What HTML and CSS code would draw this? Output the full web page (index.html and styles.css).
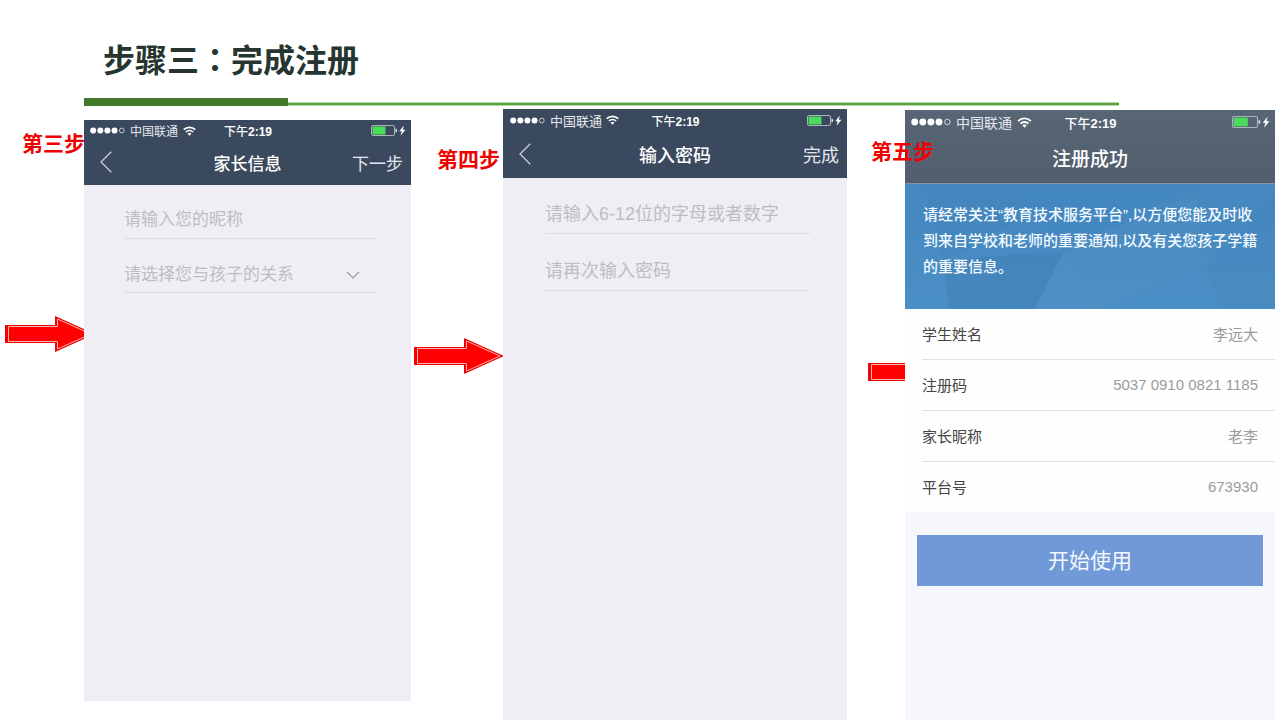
FILE: index.html
```html
<!DOCTYPE html>
<html lang="zh-CN">
<head>
<meta charset="utf-8">
<meta name="viewport" content="width=device-width, initial-scale=1">
<title>步骤三：完成注册</title>
<link rel="stylesheet" href="styles.css">
</head>
<body>
<svg class="defs" aria-hidden="true">
  <symbol id="dots" viewBox="0 0 35 7">
    <g fill="#fff"><circle cx="3.2" cy="3.5" r="3"/><circle cx="10.3" cy="3.5" r="3"/><circle cx="17.4" cy="3.5" r="3"/><circle cx="24.5" cy="3.5" r="3"/></g>
    <circle cx="31.8" cy="3.5" r="2.4" fill="none" stroke="#dfe4ea" stroke-width=".8"/>
  </symbol>
  <symbol id="wifi" viewBox="0 0 13 10">
    <g fill="none" stroke="#fff" stroke-width="1.7"><path d="M.7 3.7a8.2 8.2 0 0 1 11.6 0"/><path d="M2.9 6a5.1 5.1 0 0 1 7.2 0"/></g>
    <path d="M6.5 9.8 4.5 7.6a2.9 2.9 0 0 1 4 0z" fill="#fff"/>
  </symbol>
  <symbol id="battery" viewBox="0 0 35 11">
    <rect x=".5" y=".5" width="23" height="10" rx="1.5" fill="none" stroke="#a9b3bd"/>
    <rect x="1.500" y="1.500" width="13" height="8" fill="#4bdc5c"/>
    <path d="M24.5 3.6q1.6 0 1.6 1.9t-1.6 1.9z" fill="#e8ecf0"/>
    <path d="M32.800.6 28.300 6.200h2.400l-1.200 4.500L34.500 4.800h-2.700z" fill="#fff"/>
  </symbol>
  <symbol id="back" viewBox="0 0 12 22"><path d="M11.3.8 1 11l10.3 10.2" fill="none" stroke="#c9d2dc" stroke-width="1.3"/></symbol>
  <symbol id="arrow" viewBox="0 0 90 38">
    <path d="M0 10h50V1l40 18-40 18v-9H0z" fill="#f00202"/>
    <path d="M3.5 11.5h49V4L86 19 52.500 34v-7.500h-49z" fill="#f00" stroke="#ffb0b0"/>
  </symbol>
</svg>

<div class="slide">
  <header class="heading">
    <h1>步骤三<span class="colon" lang="zh-TW">：</span>完成注册</h1>
    <div class="rule"><i class="rule-thick"></i><i class="rule-thin"></i></div>
  </header>

  <main class="steps">
    <div class="gutter gutter-three">
      <h2>第三步</h2>
      <svg class="arrow" aria-hidden="true"><use href="#arrow"/></svg>
    </div>

    <section class="phone phone-three">
      <div class="bar">
        <div class="status">
          <span class="carrier"><svg class="dots"><use href="#dots"/></svg>中国联通<svg class="wifi"><use href="#wifi"/></svg></span>
          <span class="time">下午<b>2:19</b></span>
          <svg class="battery"><use href="#battery"/></svg>
        </div>
        <div class="nav">
          <button class="back" aria-label="返回"><svg><use href="#back"/></svg></button>
          <h3>家长信息</h3>
          <button class="action">下一步</button>
        </div>
      </div>
      <form class="form">
        <input class="field" type="text" placeholder="请输入您的昵称" aria-label="昵称">
        <div class="picker">
          <select class="field" aria-label="与孩子的关系"><option>请选择您与孩子的关系</option></select>
          <svg class="chevron" viewBox="0 0 14 8" aria-hidden="true"><path d="m1 1 6 6 6-6" fill="none" stroke="#9c9ca4" stroke-width="1.2"/></svg>
        </div>
      </form>
    </section>

    <div class="gutter gutter-four">
      <h2>第四步</h2>
      <svg class="arrow" aria-hidden="true"><use href="#arrow"/></svg>
    </div>

    <section class="phone phone-four">
      <div class="bar">
        <div class="status">
          <span class="carrier"><svg class="dots"><use href="#dots"/></svg>中国联通<svg class="wifi"><use href="#wifi"/></svg></span>
          <span class="time">下午<b>2:19</b></span>
          <svg class="battery"><use href="#battery"/></svg>
        </div>
        <div class="nav">
          <button class="back" aria-label="返回"><svg><use href="#back"/></svg></button>
          <h3>输入密码</h3>
          <button class="action">完成</button>
        </div>
      </div>
      <form class="form">
        <input class="field" type="password" placeholder="请输入6-12位的字母或者数字" aria-label="密码">
        <input class="field" type="password" placeholder="请再次输入密码" aria-label="确认密码">
      </form>
    </section>

    <div class="gutter gutter-five">
      <h2>第五步</h2>
      <svg class="arrow" aria-hidden="true"><use href="#arrow"/></svg>
    </div>

    <section class="phone phone-five">
      <div class="bar">
        <div class="status">
          <span class="carrier"><svg class="dots"><use href="#dots"/></svg>中国联通<svg class="wifi"><use href="#wifi"/></svg></span>
          <span class="time">下午<b>2:19</b></span>
          <svg class="battery"><use href="#battery"/></svg>
        </div>
        <div class="nav"><h3>注册成功</h3></div>
      </div>
      <div class="banner">
        <svg class="facets" viewBox="0 0 370 125" preserveAspectRatio="none" aria-hidden="true">
          <path d="M20 0h82l22 32-85 45z" fill="#3d7db4" opacity=".2"/>
          <path d="M102 0h190l-133 68z" fill="#3f86c4" opacity=".3"/>
          <path d="M38 76l121-9-29 58H44z" fill="#3877ab" opacity=".3"/>
          <path d="M159 68l35 57h-64z" fill="#6aa3cf" opacity=".15"/>
          <path d="M159 68 292 10l10 70-108 45z" fill="#6ba5d0" opacity=".1"/>
          <path d="M302 80l68-70v115h-56z" fill="#3f80b8" opacity=".15"/>
        </svg>
        <p>请经常关注“教育技术服务平台”,以方便您能及时收<br>到来自学校和老师的重要通知,以及有关您孩子学籍<br>的重要信息。</p>
      </div>
      <dl class="details">
        <div><dt>学生姓名</dt><dd>李远大</dd></div>
        <div><dt>注册码</dt><dd>5037 0910 0821 1185</dd></div>
        <div><dt>家长昵称</dt><dd>老李</dd></div>
        <div><dt>平台号</dt><dd>673930</dd></div>
      </dl>
      <div class="start"><button>开始使用</button></div>
    </section>
  </main>
</div>
</body>
</html>
```
FILE: styles.css
```css
* { box-sizing: border-box; }

body {
  margin: 0;
  background: #fff;
  font-family: "Liberation Sans", "Noto Sans CJK SC", sans-serif;
}

h1, h2, h3, p, dl, dd { margin: 0; }

button, input, select {
  margin: 0;
  padding: 0;
  border: 0;
  border-radius: 0;
  background: none;
  font: inherit;
  color: inherit;
}

svg { display: block; flex: none; }
.defs { position: absolute; width: 0; height: 0; }

.slide {
  display: flex;
  flex-direction: column;
  min-height: 100vh;
  overflow: hidden;
}

.heading h1 {
  padding: 37px 0 13px 103px;
  font-size: 32px;
  line-height: 48px;
  color: #263530;
}
.colon { font-family: "Noto Sans CJK TC", sans-serif; line-height: 1; }

.rule {
  display: grid;
  grid-template-columns: 204fr 831fr 161fr;
  align-items: end;
  margin-left: 84px;
}
.rule-thick { height: 8px; background: #43792a; }
.rule-thin {
  height: 4px;
  background: #5b9f45;
  border: solid #b5dba5;
  border-width: 1px 0;
}

.steps {
  flex: 1;
  display: grid;
  grid-template-columns: 84fr 327fr 92fr 344fr 58fr 370fr 5fr;
}

.gutter { min-width: 0; white-space: nowrap; }
.gutter h2 {
  font-size: 21px;
  line-height: 30px;
  color: #f00000;
}
.arrow { width: 90px; height: 38px; }

.gutter-three { padding: 23px 0 0 5px; }
.gutter-three h2 { padding-left: 17px; }
.gutter-three .arrow { margin-top: 156px; }

.gutter-four { padding: 39px 0 0 3px; }
.gutter-four h2 { padding-left: 23px; }
.gutter-four .arrow { margin-top: 162px; }

.gutter-five { padding: 31px 0 0 21px; }
.gutter-five h2 { position: relative; z-index: 2; padding-left: 3px; }
.gutter-five .arrow { margin-top: 186px; }

.phone {
  position: relative;
  z-index: 1;
  min-width: 0;
  background: #efeef4;
}
.phone-three { margin: 14px 0 19px; }
.phone-four { margin-top: 3px; }
.phone-five { margin-top: 4px; background: #f5f7fd; }

.bar { background: #3a495d; color: #fff; }
.phone-five .bar {
  background: linear-gradient(#576575, #525e6d);
  border-bottom: 1px solid #8394a3;
}

.status {
  display: grid;
  grid-template-columns: 1fr auto 1fr;
  align-items: center;
  height: 21px;
  padding: 0 5px 0 6px;
  font-size: 12px;
  white-space: nowrap;
}
.carrier { display: flex; align-items: center; gap: 5px; color: #e6eaf0; }
.time { font-weight: 500; }
.dots { width: 35px; height: 7px; }
.wifi { width: 13px; height: 10px; }
.battery { width: 35px; height: 11px; justify-self: end; }
.phone-four .status { height: 22px; }
.phone-four .carrier { gap: 4px; font-size: 13px; }
.phone-four .dots { width: 37px; }
.phone-five .status { height: 24px; font-size: 13px; }
.phone-five .carrier { font-size: 14px; }
.phone-five .dots { width: 40px; height: 8px; }
.phone-five .wifi { width: 15px; height: 11px; }
.phone-five .battery { width: 38px; height: 12px; }

.nav {
  display: grid;
  grid-template-columns: 1fr auto 1fr;
  align-items: center;
  height: 44px;
  padding: 0 8px 2px;
  font-size: 17px;
}
.nav h3 { grid-column: 2; font-size: inherit; font-weight: 500; }
.action { justify-self: end; color: #e3e8ef; }
.back { justify-self: start; padding-left: 8px; }
.back svg { width: 12px; height: 22px; }
.phone-four .nav { height: 47px; font-size: 18px; }
.phone-five .nav { height: 49px; padding-bottom: 2px; font-size: 19px; }

.form {
  display: grid;
  row-gap: 17px;
  padding: 17px 35px 0 40px;
  font-size: 17px;
}
.phone-four .form {
  row-gap: 18px;
  padding: 17px 37px 0 42px;
  font-size: 18px;
}
.field {
  width: 100%;
  height: 37px;
  border-bottom: 1px solid #dadadf;
  outline: 0;
  color: #bdbdc4;
}
.field::placeholder { color: #bdbdc4; opacity: 1; }
.phone-three .field { appearance: none; }
.phone-four .field { height: 39px; }

.picker { position: relative; }
.chevron {
  position: absolute;
  right: 16px;
  top: 15px;
  width: 14px;
  height: 8px;
  pointer-events: none;
}

.banner {
  position: relative;
  padding: 18px 17px 29px 18px;
  background: linear-gradient(#4587bf, #4a8fc5);
  color: #f4faff;
}
.banner p {
  position: relative;
  font-size: 15px;
  font-weight: 500;
  line-height: 26px;
  white-space: nowrap;
}
.facets { position: absolute; inset: 0; width: 100%; height: 100%; }

.details {
  padding-left: 17px;
  background: #fefefe;
  font-size: 15px;
}
.details div {
  display: flex;
  align-items: center;
  justify-content: space-between;
  height: 51px;
  padding: 0 17px 2px 0;
  border-bottom: 1px solid #e0e0e2;
}
.details div:last-child { height: 50px; border-bottom: 0; }
.details dt { color: #444; }
.details dd { color: #9b9b9b; }

.start { padding: 23px 12px; }
.start button {
  width: 100%;
  height: 51px;
  padding-bottom: 4px;
  background: #7199d8;
  color: #f2f8ff;
  font-size: 21px;
}
```
